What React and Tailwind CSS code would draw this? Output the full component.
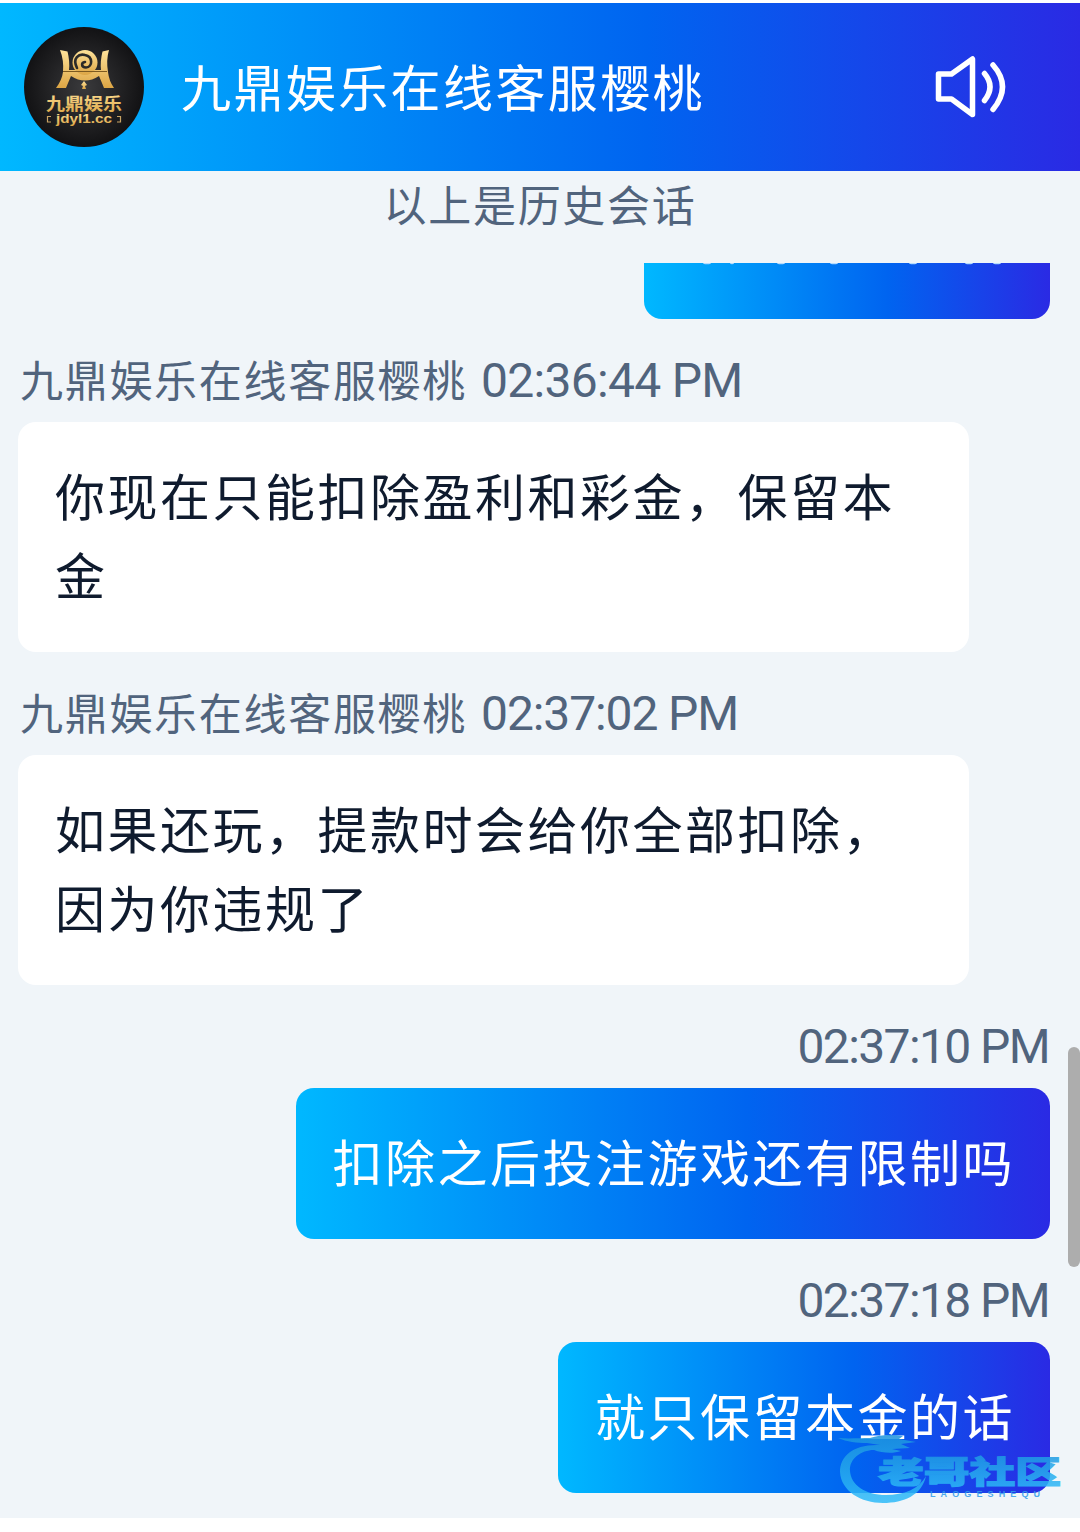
import React from "react";

const agentName = "九鼎娱乐在线客服樱桃";

const messages = [
  { id: 1, from: "agent", time: "02:36:44 PM", timeClass: "tracking-[-0.7px]", lines: ["你现在只能扣除盈利和彩金，保留本", "金"] },
  { id: 2, from: "agent", time: "02:37:02 PM", timeClass: "tracking-[-1.1px]", lines: ["如果还玩，提款时会给你全部扣除，", "因为你违规了"] },
  { id: 3, from: "visitor", time: "02:37:10 PM", timeClass: "tracking-[-1.6px]", lines: ["扣除之后投注游戏还有限制吗"] },
  { id: 4, from: "visitor", time: "02:37:18 PM", timeClass: "tracking-[-1.6px]", lines: ["就只保留本金的话"] },
];

const gradient = "bg-[linear-gradient(90deg,#00b8ff_0%,#0064f0_60%,#2a2ae4_100%)]";

const Avatar = () => (
  <svg viewBox="0 0 120 120" className="size-[120px] shrink-0">
    <defs>
      <radialGradient id="disc">
        <stop offset="0" stopColor="#3a3a3c" />
        <stop offset="1" stopColor="#121214" />
      </radialGradient>
      <linearGradient id="gold" x1="0" y1="0" x2="0" y2="1">
        <stop offset="0" stopColor="#ffe39a" />
        <stop offset="1" stopColor="#dca544" />
      </linearGradient>
    </defs>
    <circle cx="60" cy="60" r="60" fill="url(#disc)" />
    <g fill="url(#gold)">
      <path d="M36 23l7.500 1.500q2.500 10 1.500 18.500h32q-1-8.500 1.500-18.500l6.500-1.500q-3 10-1 22 1 9 6 16h-10q-2-5-5-12-14 9-28 0-3 7-5 12h-10q6-8 7-16 1-12-3-22z" />
      <path d="M60 54l3 4-2 1 1 3h-4l1-3-2-1z" />
      <circle cx="61" cy="35.500" r="12.500" />
    </g>
    <path d="M53 41C48 31 55 26.500 61 28c8 1.500 8 12 1 12.500-5 0-5-5-1-5.500" fill="none" stroke="#2b2a28" strokeWidth="2.600" strokeLinecap="round" />
    <path d="M39 44.500h44" stroke="#7c5a20" strokeWidth="1" />
    <text x="60" y="83" textAnchor="middle" fontSize="17" fontWeight="700" textLength="76" lengthAdjust="spacingAndGlyphs" fill="url(#gold)" className="font-['Noto_Sans_CJK_SC',sans-serif]">九鼎娱乐</text>
    <text x="60" y="96" textAnchor="middle" fontSize="12" fontWeight="700" textLength="56" lengthAdjust="spacingAndGlyphs" fill="url(#gold)" className="font-['Liberation_Sans',sans-serif]">jdyl1.cc</text>
    <path d="M27 89.500h-3.500v5.500h3.500M93 89.500h3.500v5.500h-3.500" fill="none" stroke="#c9a464" strokeWidth="1.200" />
  </svg>
);

const SpeakerIcon = () => (
  <svg viewBox="0 0 72 62" className="h-[62px] w-[72px]" fill="none" stroke="#fff" strokeWidth="5.500" strokeLinecap="round" strokeLinejoin="round">
    <path d="M3.500 18h13L37.500 3v55.500L16.500 43h-13z" />
    <path d="M49.500 17.500q11 13 0 27" />
    <path d="M58 9q19 21.500 0 44.500" />
  </svg>
);

const Watermark = () => (
  <svg viewBox="0 0 230 72" className="absolute left-[835px] top-[1434px] h-[72px] w-[230px]" opacity="0.850">
    <defs>
      <linearGradient id="wm" x1="0" y1="0" x2="0" y2="1">
        <stop offset="0" stopColor="#1c94de" />
        <stop offset="1" stopColor="#2fbcfa" />
      </linearGradient>
    </defs>
    <path d="M45 11C18 10 5 22 5 38c1 19 21 31 43 31 21 0 39-8 43-27-7 13-22 19-40 19-21 0-35-10-36-24C14 25 26 16 39 16c8 3 19 4 27 1l-9-2 18-1-9-4 15-2-17-3 4-3c-13-2-24-1-33 2-10 0-21 1-32 0 9 4 19 5 29 5z" fill="url(#wm)" />
    <text x="43" y="49" fontSize="31" fontWeight="900" textLength="183" lengthAdjust="spacingAndGlyphs" stroke="url(#wm)" strokeWidth="1.200" fill="url(#wm)" className="font-['Noto_Sans_CJK_SC',sans-serif]">老哥社区</text>
    <text x="95" y="63" fontSize="9" fontWeight="700" textLength="110" fill="#2f9cec" className="font-['Liberation_Sans',sans-serif]">LAOGESHEQU</text>
  </svg>
);

// bubble scrolled under the notice, only the feet of its glyphs still show
const ClippedBubble = () => (
  <div className={`mr-[30px] mb-[32px] h-[56px] w-[406px] shrink-0 self-end rounded-b-[18px] ${gradient}`}>
    <svg viewBox="0 0 406 4" className="h-[4px] w-[406px]" fill="#b5dcff">
      {[63, 88, 137, 190, 269, 325, 353].map((x, i) => (
        <ellipse key={x} cx={x} cy="0" rx={i === 1 ? 2 : 4} ry="1.300" />
      ))}
    </svg>
  </div>
);

const MessageMeta = ({ message }) => (
  <div className="flex h-[60px] items-center whitespace-pre text-[#51647d]">
    {message.from === "agent" && (
      <span className="mr-[14px] ml-[2px] pb-[6px] text-[43px] leading-[60px] tracking-[1.7px]">{agentName}</span>
    )}
    <span className={`mr-px font-[Roboto,sans-serif] text-[48px] ${message.timeClass}`}>{message.time}</span>
  </div>
);

const Message = ({ message }) => {
  const isAgent = message.from === "agent";

  return (
    <div className={`flex flex-col ${isAgent ? "items-start pl-[18px]" : "items-end pr-[30px]"}`}>
      <MessageMeta message={message} />
      <div
        className={`mt-[11px] rounded-[18px] pt-[33px] pr-[35px] pb-[39px] pl-[37px] text-[50px] leading-[79px] tracking-[2.5px] whitespace-nowrap ${
          isAgent ? "w-[951px] bg-white text-[#0f1b2e]" : `${gradient} text-white`
        }`}
      >
        {message.lines.map((line) => (
          <p key={line}>{line}</p>
        ))}
      </div>
    </div>
  );
};

const App = () => {
  return (
    <div className="relative h-[1532px] w-[1080px] overflow-hidden bg-white pt-[3px] font-['Noto_Sans_CJK_SC',sans-serif]">
      <header className={`flex h-[168px] items-center pr-[73px] pl-[24px] text-white ${gradient}`}>
        <Avatar />
        <h1 className="ml-[37px] pb-[3px] text-[50px] tracking-[2.4px]">{agentName}</h1>
        <div className="ml-auto">
          <SpeakerIcon />
        </div>
      </header>

      <main className="h-[1347px] bg-[#f0f5f9]">
        <div className="flex h-[92px] justify-center text-[43px] leading-[65px] tracking-[1.7px] text-[#51647d]">
          以上是历史会话
        </div>
        <div className="flex h-[1255px] flex-col overflow-hidden">
          <ClippedBubble />
          <div className="flex flex-col gap-[32px]">
            {messages.map((message) => (
              <Message key={message.id} message={message} />
            ))}
          </div>
        </div>
      </main>

      {/* scrollbar thumb */}
      <div className="absolute top-[1047px] left-[1068px] h-[220px] w-[12px] rounded-full bg-[#adadad]" />
      <Watermark />
    </div>
  );
};

export default App;
